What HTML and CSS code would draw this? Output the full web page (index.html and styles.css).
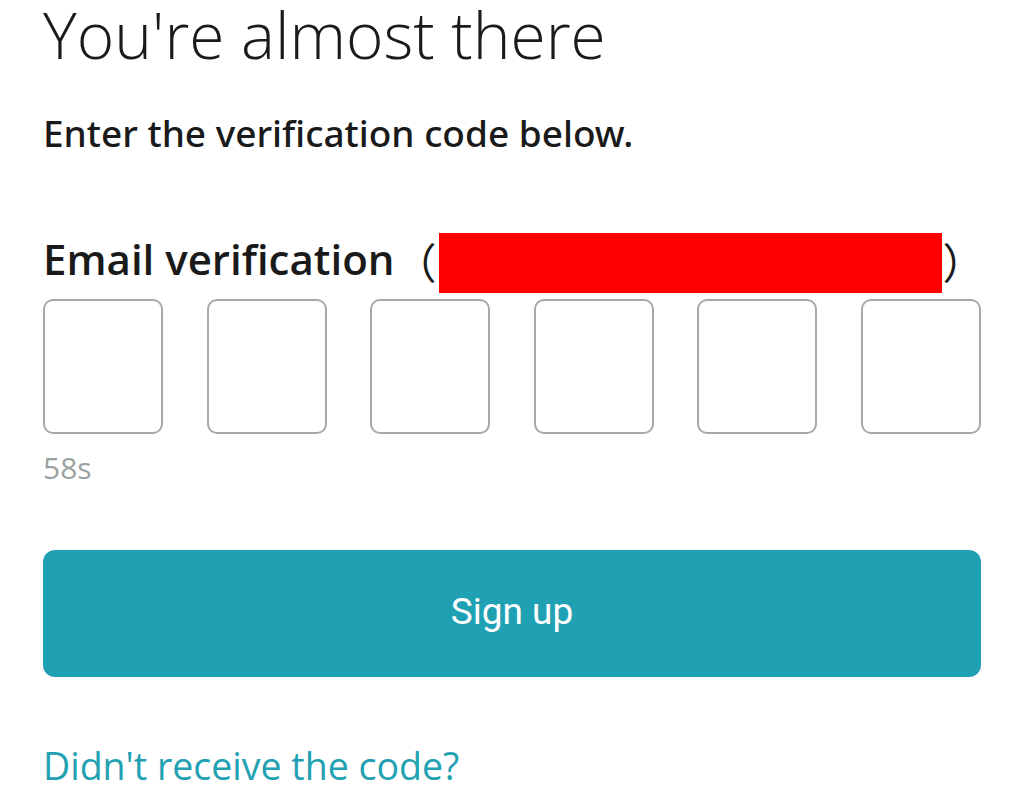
FILE: index.html
```html
<!DOCTYPE html>
<html lang="en">
<head>
    <meta charset="UTF-8">
    <meta name="viewport" content="width=device-width, initial-scale=1.0">
    <title>Verify email</title>
    <link rel="stylesheet" href="styles.css">
</head>
<body>
    <div class="container">
        <h1>You're almost there</h1>
        <p class="subtitle">Enter the verification code below.</p>

        <div class="label">
            <span class="label-text">Email verification</span>
            <span class="paren">（</span>
            <span class="hidden-email"></span>
            <span class="paren">）</span>
        </div>

        <div class="code-boxes">
            <input type="text" maxlength="1" class="code-box">
            <input type="text" maxlength="1" class="code-box">
            <input type="text" maxlength="1" class="code-box">
            <input type="text" maxlength="1" class="code-box">
            <input type="text" maxlength="1" class="code-box">
            <input type="text" maxlength="1" class="code-box">
        </div>
        <div class="timer">58s</div>

        <button class="signup-btn">Sign up</button>

        <a href="#" class="resend">Didn't receive the code?</a>
    </div>
</body>
</html>
```

FILE: styles.css
```css
body {
    margin: 0;
    background: #ffffff;
    color: #1a1a1a;
    font-family: 'Open Sans', 'Noto Sans', sans-serif;
}

.container {
    padding: 3px 43px 0 43px;
}

h1 {
    margin: 0;
    font-size: 64px;
    font-weight: 300;
    line-height: 64px;
}

.subtitle {
    margin: 47px 0 0 0;
    font-family: 'Noto Sans', 'Open Sans', sans-serif;
    font-size: 37px;
    font-weight: 500;
    line-height: 37px;
}

.label {
    display: flex;
    align-items: flex-start;
    height: 60px;
    margin-top: 82px;
    white-space: nowrap;
}

.label-text {
    flex-shrink: 0;
    font-size: 42px;
    font-weight: 600;
    line-height: 52px;
}

.paren {
    flex-shrink: 0;
    width: 42px;
    font-family: 'Noto Sans CJK SC', sans-serif;
    font-size: 42px;
    font-weight: 400;
    line-height: 56px;
}

.hidden-email {
    flex-shrink: 0;
    width: 503px;
    height: 60px;
    margin-left: 3px;
    background: #ff0000;
}

.code-boxes {
    display: flex;
    justify-content: space-between;
    margin-top: 6px;
}

.code-box {
    box-sizing: border-box;
    width: 120px;
    height: 135px;
    border: 2px solid #a4aaa9;
    border-radius: 10px;
    font-size: 48px;
    text-align: center;
    outline: none;
}

.timer {
    margin-top: 19px;
    font-size: 30px;
    line-height: 30px;
    color: #9aa1a1;
}

.signup-btn {
    display: block;
    width: 100%;
    height: 127px;
    margin-top: 67px;
    padding: 0 0 4px 0;
    border: none;
    border-radius: 12px;
    background: #1fa1b3;
    color: #ffffff;
    font-family: 'Roboto', sans-serif;
    font-size: 37px;
    cursor: pointer;
}

.resend {
    display: block;
    margin-top: 70px;
    font-size: 37.5px;
    line-height: 37.5px;
    color: #22a1b3;
    text-decoration: none;
}
```
